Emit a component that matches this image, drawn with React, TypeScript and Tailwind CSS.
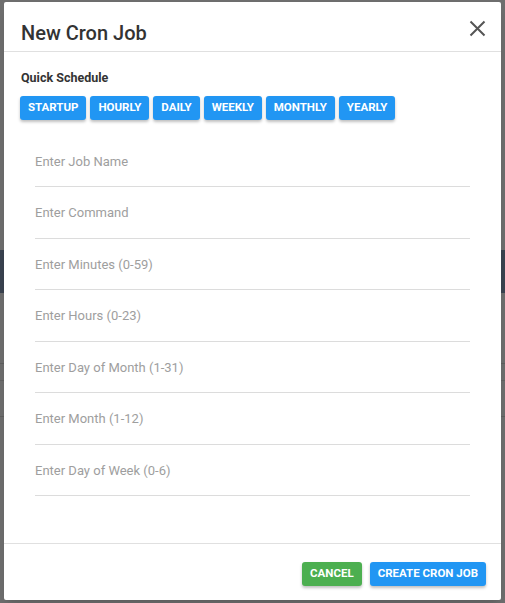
import React from "react";

const presets = ["startup", "hourly", "daily", "weekly", "monthly", "yearly"];

const fields = [
  "Enter Job Name",
  "Enter Command",
  "Enter Minutes (0-59)",
  "Enter Hours (0-23)",
  "Enter Day of Month (1-31)",
  "Enter Month (1-12)",
  "Enter Day of Week (0-6)",
];

export default function App() {
  return (
    <div className="relative h-[603px] w-[505px] overflow-hidden bg-[#6e6e6e] font-['Roboto','Liberation_Sans',sans-serif]">
      {/* page behind the overlay */}
      <div className="h-[250px]" />
      <div className="h-[43px] bg-[#3a4350]" />
      <div className="h-[71px] border-b border-[#5f5f5f]" />
      <div className="h-[17px] border-b border-[#626262]" />
      <div className="h-[36px] border-b border-[#5f5f5f]" />

      {/* modal */}
      <div className="absolute left-[4px] top-[2px] flex h-[598px] w-[497px] flex-col rounded-[2px] bg-white shadow-lg">
        <div className="flex h-[50px] items-center justify-between border-b border-[#e0e0e0] pl-[17px] pr-[15px]">
          <h2 className="pt-[12px] text-[20px] font-medium text-[#333]">New Cron Job</h2>
          <button className="pt-[4px] text-[#555]">
            <svg width="17" height="17" viewBox="0 0 17 17" fill="none" stroke="currentColor" strokeWidth="2">
              <path d="M1.5 1.5 L15.5 15.5 M15.5 1.5 L1.5 15.5" />
            </svg>
          </button>
        </div>

        <div className="flex-1 px-[16px] pt-[17px]">
          <div className="pl-[1px] text-[12.5px] font-bold text-[#333]">Quick Schedule</div>
          <div className="mt-[8px] flex gap-[4px]">
            {presets.map((p) => (
              <button
                key={p}
                className="h-[24px] rounded-[3px] bg-[#2196f3] px-[8px] text-[11.5px] font-bold uppercase text-white shadow-[0_2px_3px_rgba(0,0,0,0.25)]"
              >
                {p}
              </button>
            ))}
          </div>

          <div className="mt-[16px] px-[15px]">
            {fields.map((f) => (
              <input
                key={f}
                placeholder={f}
                className="block h-[51.5px] w-full border-b border-[#dcdcdc] text-[13px] text-[#333] outline-none placeholder:text-[#9e9e9e]"
              />
            ))}
          </div>
        </div>

        <div className="flex h-[57px] items-center justify-end gap-[8px] border-t border-[#e0e0e0] px-[15px] pt-[3px]">
          <button className="h-[24px] rounded-[3px] bg-[#4caf50] px-[8px] text-[11.5px] font-bold uppercase text-white shadow-[0_2px_3px_rgba(0,0,0,0.25)]">
            Cancel
          </button>
          <button className="h-[24px] rounded-[3px] bg-[#2196f3] px-[8px] text-[11.5px] font-bold uppercase text-white shadow-[0_2px_3px_rgba(0,0,0,0.25)]">
            Create Cron Job
          </button>
        </div>
      </div>
    </div>
  );
}
